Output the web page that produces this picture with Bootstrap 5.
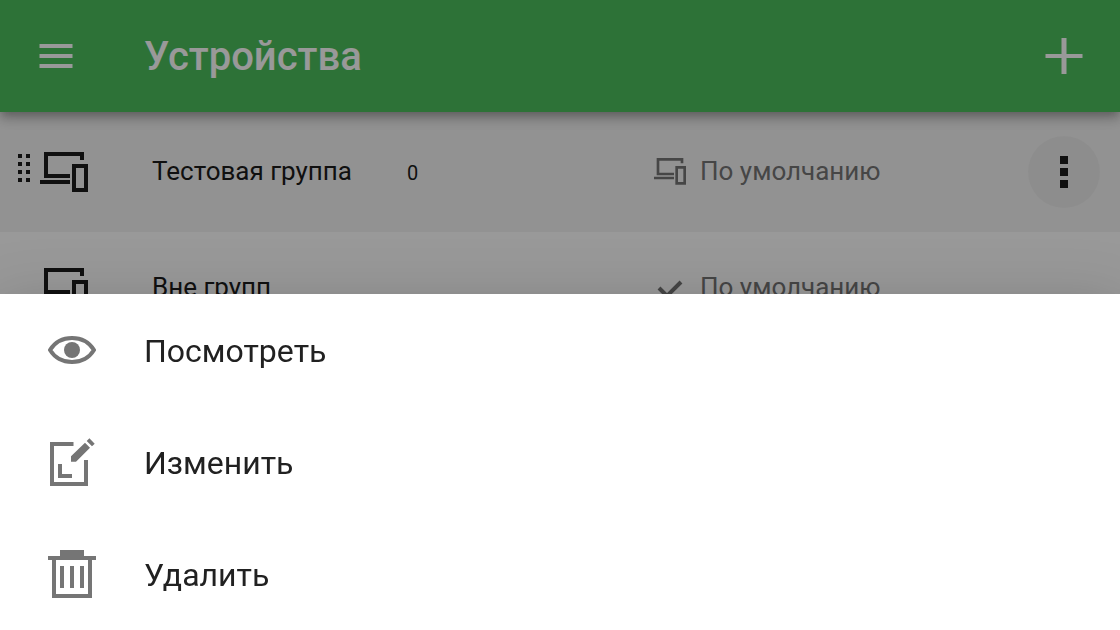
<!DOCTYPE html>
<html lang="ru">
<head>
<meta charset="utf-8">
<meta name="viewport" content="width=device-width, initial-scale=1">
<title>Устройства</title>
<link href="https://cdn.jsdelivr.net/npm/bootstrap@5.3.0/dist/css/bootstrap.min.css" rel="stylesheet">
<style>
  body { font-family: Roboto, sans-serif; color: #1b1b1b; background: #fff; overflow: hidden; }
  svg { display: block; flex: none; }
  .app-bar { height: 112px; padding: 0 32px; background: #4bbe5c; color: #fff; position: relative; z-index: 1;
    box-shadow: 0 4px 8px -2px rgba(0,0,0,.2), 0 8px 10px 0 rgba(0,0,0,.14), 0 2px 20px 0 rgba(0,0,0,.12); }
  .app-title { font-size: 40px; line-height: 48px; font-weight: 500; margin-left: 64px; padding-top: 2px; }
  .bar-btn { width: 48px; height: 48px; }
  .device-row { height: 112px; padding: 0 20px 0 18px; }
  .device-row.hovered { height: 120px; background: #f4f4f4; }
  .grip { width: 22px; }
  .device-icon { width: 48px; height: 40px; }
  .row-text { font-size: 26px; line-height: 32px; padding-bottom: 2px; }
  .device-name { margin-left: 64px; }
  .device-count { font-size: 20px; line-height: 32px; margin-left: 55px; padding-top: 1px; }
  .profile-col { width: 446px; gap: 14px; color: #757575; }
  .more-btn { width: 72px; height: 72px; background: #ececec; color: #1b1b1b; }
  .scrim { background: rgba(0,0,0,.4); z-index: 1040; }
  .action-sheet { z-index: 1050; background: #fff;
    box-shadow: 0 16px 20px -10px rgba(0,0,0,.2), 0 32px 48px 4px rgba(0,0,0,.14), 0 12px 60px 10px rgba(0,0,0,.12); }
  .sheet-item { height: 112px; padding: 0 48px; gap: 48px; font-size: 32px; line-height: 40px; color: #212121; }
  .sheet-item span { padding-top: 2px; }
  .sheet-item svg { color: #757575; }
</style>
</head>
<body>
<svg class="d-none">
  <symbol id="devices" viewBox="0 0 48 40" preserveAspectRatio="xMidYMin meet">
    <path fill="currentColor" d="M4 0h40v8h-4V4H8v18h22v4H4zM0 28h30v4H0zM32 12h16v28H32zm4 4v20h8V16z" fill-rule="evenodd"/>
  </symbol>
</svg>

<header class="app-bar d-flex align-items-center">
  <button type="button" class="btn p-0 border-0 bar-btn text-white" aria-label="Меню">
    <svg width="48" height="48" fill="currentColor"><path d="M7.500 12h33v4h-33zM7.500 22h33v4h-33zM7.500 32h33v4h-33z"/></svg>
  </button>
  <h1 class="app-title mb-0">Устройства</h1>
  <button type="button" class="btn p-0 border-0 bar-btn text-white ms-auto" aria-label="Добавить">
    <svg width="48" height="48" fill="currentColor"><path d="M21.500 6h5v16h16v4h-16v16h-5V26h-16v-4h16z"/></svg>
  </button>
</header>

<main>
  <ul class="list-unstyled mb-0">
    <li class="device-row hovered d-flex align-items-center">
      <span class="grip">
        <svg width="12" height="36" fill="#1b1b1b"><path d="M0 0h4v4H0zM8 0h4v4H8zM0 8h4v4H0zM8 8h4v4H8zM0 16h4v4H0zM8 16h4v4H8zM0 24h4v4H0zM8 24h4v4H8z"/></svg>
      </span>
      <svg class="device-icon"><use href="#devices"/></svg>
      <span class="device-name row-text">Тестовая группа</span>
      <span class="device-count">0</span>
      <span class="profile-col d-flex align-items-center ms-auto">
        <svg width="32" height="28"><use href="#devices"/></svg>
        <span class="row-text">По умолчанию</span>
        <button type="button" class="btn p-0 border-0 rounded-circle more-btn ms-auto d-flex align-items-center justify-content-center" aria-label="Действия">
          <svg width="8" height="32" fill="currentColor"><path d="M0 0h8v8H0zM0 12h8v8H0zM0 24h8v8H0z"/></svg>
        </button>
      </span>
    </li>
    <li class="device-row d-flex align-items-center">
      <span class="grip"></span>
      <svg class="device-icon"><use href="#devices"/></svg>
      <span class="device-name row-text">Вне групп</span>
      <span class="profile-col d-flex align-items-center ms-auto">
        <svg width="32" height="28" fill="none" stroke="currentColor" stroke-width="4"><path d="M5 14l8 8L27 8"/></svg>
        <span class="row-text">По умолчанию</span>
      </span>
    </li>
  </ul>
</main>

<div class="scrim position-fixed top-0 start-0 w-100 h-100"></div>

<div class="action-sheet fixed-bottom d-flex flex-column" role="dialog" aria-label="Действия с группой">
  <button type="button" class="btn border-0 rounded-0 sheet-item d-flex align-items-center">
    <svg width="48" height="48" viewBox="0 0 48 48" fill="none" stroke="currentColor" stroke-width="4"><path d="M2 24C7 16 15 12 24 12s17 4 22 12c-5 8-13 12-22 12S7 32 2 24z"/><circle cx="24" cy="24" r="8" fill="currentColor" stroke="none"/></svg>
    <span>Посмотреть</span>
  </button>
  <button type="button" class="btn border-0 rounded-0 sheet-item d-flex align-items-center">
    <svg width="48" height="48" viewBox="0 0 48 48" fill="currentColor"><path d="M2 4h23.500v4H6v36h30V22h4v26H2zM10 26h4v10h10v4H10zM23 23.700v-5.400L37 4.700l5 5-14 14zM38.700 3l2.700-2.700 5.300 5.400L44 8.300z"/></svg>
    <span>Изменить</span>
  </button>
  <button type="button" class="btn border-0 rounded-0 sheet-item d-flex align-items-center">
    <svg width="48" height="48" viewBox="0 0 48 48" fill="currentColor"><path d="M12 0h24v6h12v4h-4v38H4V10H0V6h12zM8 10v34h32V10zM12 16h4v22h-4zM22 16h4v22h-4zM32 16h4v22h-4z" fill-rule="evenodd"/></svg>
    <span>Удалить</span>
  </button>
</div>
<script src="https://cdn.jsdelivr.net/npm/bootstrap@5.3.0/dist/js/bootstrap.bundle.min.js"></script>
</body>
</html>
